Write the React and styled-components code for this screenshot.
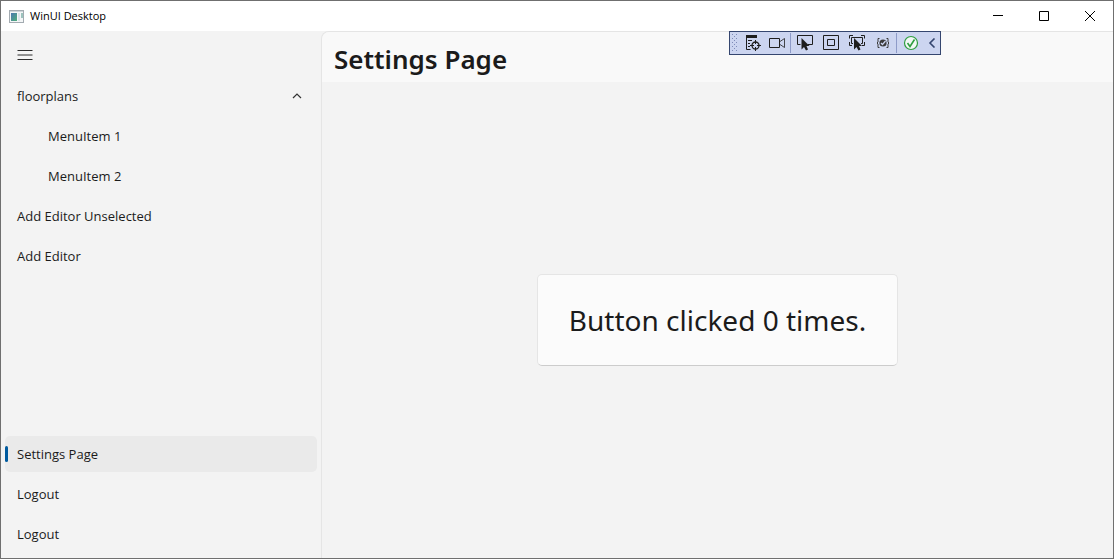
import React, { useState } from "react";
import styled, { createGlobalStyle, css } from "styled-components";

const displayFont = `"Segoe UI", "Noto Sans", sans-serif`;

const GlobalStyle = createGlobalStyle`
  *, *::before, *::after { box-sizing: border-box; }
  body {
    margin: 0;
    font-family: "Segoe UI", "Open Sans", "Noto Sans", sans-serif;
    font-size: 13px;
    color: #1b1b1b;
  }
  button { font: inherit; color: inherit; border: 0; padding: 0; background: none; }
  svg { display: block; }
`;

const Window = styled.div`
  position: relative;
  display: flex;
  flex-direction: column;
  min-height: 100vh;
  border: 1px solid #6f6f6f;
  background: #f3f3f3;
`;

const TitleBar = styled.header`
  display: flex;
  align-items: center;
  height: 30px;
  padding-left: 8px;
  background: #fff;
`;

const WindowTitle = styled.span`
  flex: 1;
  margin-left: 6px;
  font-size: 11px;
  line-height: 16px;
  color: #000;
`;

const CaptionButton = styled.button`
  display: grid;
  place-items: center;
  width: 46px;
  height: 30px;
`;

const Body = styled.div`
  display: flex;
  flex: 1;
`;

const Sidebar = styled.nav`
  display: flex;
  flex-direction: column;
  flex: 0 0 320px;
  padding: 4px;
`;

const MenuToggle = styled.button`
  display: grid;
  place-items: center;
  width: 40px;
  height: 40px;
`;

const NavList = styled.ul`
  display: grid;
  gap: 4px;
  list-style: none;
  margin: ${(p) => (p.$bottom ? "auto" : "3px")} 0 2px;
  padding: 0;
`;

const NavItem = styled.button`
  display: flex;
  align-items: center;
  justify-content: space-between;
  position: relative;
  width: 100%;
  height: 36px;
  padding: 0 15px 0 ${(p) => (p.$nested ? 43 : 12)}px;
  border-radius: 5px;
  line-height: 20px;
  text-align: left;
  ${(p) => p.$selected && css`
    background: #eaeaea;
    &::before {
      content: "";
      position: absolute;
      left: 0;
      top: 10px;
      width: 3px;
      height: 16px;
      border-radius: 2px;
      background: #005a9e;
    }
  `}
`;

const Content = styled.main`
  display: flex;
  flex-direction: column;
  flex: 1;
  border: solid #e5e5e5;
  border-width: 1px 0 0 1px;
  border-top-left-radius: 8px;
  overflow: hidden;
`;

const PageHeader = styled.div`
  height: 50px;
  padding: 7px 12px;
  background: #f9f9f9;
`;

const PageTitle = styled.h1`
  margin: 0;
  font-family: ${displayFont};
  font-size: 26px;
  line-height: 40px;
  font-weight: 600;
`;

const Stage = styled.div`
  display: grid;
  place-items: center;
  flex: 1;
`;

const CounterButton = styled.button`
  padding: 25px 31px;
  border: 1px solid #e5e5e5;
  border-bottom-color: #cccccc;
  border-radius: 5px;
  background: #fbfbfb;
  font-family: ${displayFont};
  font-size: 28px;
  line-height: 40px;
`;

const DebugToolbar = styled.div`
  position: absolute;
  top: 30px;
  right: 172px;
  display: flex;
  align-items: center;
  width: 212px;
  height: 24px;
  border: 1px solid #35466f;
  background: #ccd5f0;
`;

const Tool = styled.button`
  display: grid;
  place-items: center;
  width: ${(p) => p.$width || 26}px;
  height: 22px;
`;

const Divider = styled.span`
  width: 1px;
  height: 20px;
  margin-right: 1px;
  background: #8e9bc8;
`;

const AppIcon = () => (
  <svg width="15" height="13" viewBox="0 0 15 13">
    <defs>
      <linearGradient id="screen" x1="0" y1="0" x2="1" y2="1">
        <stop offset="0" stopColor="#4a78b0" />
        <stop offset="1" stopColor="#4fae79" />
      </linearGradient>
    </defs>
    <rect x=".5" y=".5" width="14" height="12" fill="#f4f6f7" stroke="#a3abb1" />
    <path d="M1 1.500h13" stroke="#cdd4d8" />
    <rect x="2" y="3" width="6" height="8" fill="url(#screen)" />
    <rect x="9" y="3" width="2" height="8" fill="#dbe5ea" />
    <rect x="12" y="3" width="2" height="5" fill="#9cc3bd" />
  </svg>
);

const Grip = () => (
  <svg width="10" height="20" viewBox="0 0 10 20" fill="#7f8cb8">
    {[0, 1, 2, 3, 4, 5, 6, 7, 8].map((row) =>
      (row % 2 ? [4] : [2, 6]).map((x) => (
        <rect key={`${row}-${x}`} x={x} y={row * 2 + 1} width="1" height="1" />
      ))
    )}
  </svg>
);

const TreeIcon = () => (
  <svg width="18" height="18" viewBox="0 0 18 18" fill="none" stroke="#1e1e1e">
    <path d="M2 1h11v3H2z" fill="#1e1e1e" stroke="none" />
    <path d="M2.500 4v11.500h4M4 6.500h4M4 9.500h2M4 12.500h2" />
    <circle cx="11.500" cy="11.500" r="3.500" strokeWidth="1.300" />
    <path d="M11.500 6v4M11.500 13v4M6 11.500h4M13 11.500h4" />
  </svg>
);

const CameraIcon = () => (
  <svg width="18" height="14" viewBox="0 0 18 14" fill="none" stroke="#1e1e1e">
    <path d="M.5 2.500h10v9H.5z" />
    <path d="M11 5.500l4.500-3v9L11 8.500" strokeWidth=".8" />
  </svg>
);

const SelectIcon = () => (
  <svg width="18" height="18" viewBox="0 0 18 18" fill="none" stroke="#1e1e1e">
    <path d="M4.500 10.500h-3v-9h15v9H12" />
    <path d="M5.500 4v11.500l2.500-2.500 2 3.500 2-1-1.500-3.500H13.500z" fill="#1e1e1e" stroke="none" />
  </svg>
);

const AdornerIcon = () => (
  <svg width="16" height="16" viewBox="0 0 16 16" fill="none" stroke="#1e1e1e">
    <path d="M.5.5h15v14H.5zM4.500 4.500h7v6h-7z" />
  </svg>
);

const TrackIcon = () => (
  <svg width="18" height="18" viewBox="0 0 18 18" fill="none" stroke="#1e1e1e">
    <path d="M1.500 4.500V1.500H5M13 1.500h3.500v3M1.500 8v3.500H4M16.500 8v3.500H14M5 9.500H3.500v-6h11v6H13" />
    <path d="M6 4v11.500l2.500-2.500 2 3.500 2-1-1.500-3.500h3z" fill="#1e1e1e" stroke="none" />
  </svg>
);

const ReloadIcon = () => (
  <svg width="14" height="12" viewBox="0 0 14 12" fill="none" stroke="#3b3b3b">
    <path d="M3.500 1.500H2v3.500L1 6l1 1v3.500h1.500M10.500 1.500H12v3.500l1 1-1 1v3.500h-1.500" />
    <circle cx="7" cy="6" r="3.600" fill="#3b3b3b" stroke="none" />
    <path d="M5 6l1.500 1.500L9.500 4" stroke="#ccd5f0" strokeWidth="1.300" />
  </svg>
);

const SuccessIcon = () => (
  <svg width="16" height="16" viewBox="0 0 16 16" fill="none">
    <circle cx="8" cy="8" r="6.500" fill="#f2f8f5" stroke="#2f9e3f" strokeWidth="1.200" />
    <path d="M4.500 8l2.500 3.500 4.500-7" stroke="#2f9e3f" strokeWidth="1.600" />
  </svg>
);

const CollapseIcon = () => (
  <svg width="8" height="10" viewBox="0 0 8 10" fill="none" stroke="#35466f" strokeWidth="1.600">
    <path d="M6.500.5L2 5l4.500 4.500" />
  </svg>
);

const ChevronUp = () => (
  <svg width="10" height="6" viewBox="0 0 10 6" fill="none" stroke="#333" strokeWidth="1.200">
    <path d="M1 5l4-4 4 4" />
  </svg>
);

const HamburgerIcon = () => (
  <svg width="16" height="12" viewBox="0 0 16 12" stroke="#2b2b2b">
    <path d="M.5 1.500h15M.5 6h15M.5 10.500h15" />
  </svg>
);

export default function App() {
  const [page, setPage] = useState("settings");
  const [open, setOpen] = useState(true);
  const [count, setCount] = useState(0);

  const item = (id, label, nested) => (
    <li key={id}>
      <NavItem $nested={nested} $selected={page === id} onClick={() => setPage(id)}>
        {label}
      </NavItem>
    </li>
  );

  return (
    <>
      <GlobalStyle />
      <Window>
        <TitleBar>
          <AppIcon />
          <WindowTitle>WinUI Desktop</WindowTitle>
          <CaptionButton aria-label="Minimize">
            <svg width="10" height="10" stroke="#000"><path d="M0 4.500h10" /></svg>
          </CaptionButton>
          <CaptionButton aria-label="Maximize">
            <svg width="10" height="10" stroke="#000" fill="none"><path d="M.5.5h9v9h-9z" /></svg>
          </CaptionButton>
          <CaptionButton aria-label="Close">
            <svg width="10" height="10" stroke="#000"><path d="M0 0l10 10M10 0L0 10" /></svg>
          </CaptionButton>
        </TitleBar>
        <Body>
          <Sidebar>
            <MenuToggle aria-label="Toggle navigation"><HamburgerIcon /></MenuToggle>
            <NavList>
              <li>
                <NavItem aria-expanded={open} onClick={() => setOpen(!open)}>
                  floorplans
                  <ChevronUp />
                </NavItem>
              </li>
              {open && item("item1", "MenuItem 1", true)}
              {open && item("item2", "MenuItem 2", true)}
              {item("unselected", "Add Editor Unselected")}
              {item("editor", "Add Editor")}
            </NavList>
            <NavList $bottom>
              {item("settings", "Settings Page")}
              {item("logout1", "Logout")}
              {item("logout2", "Logout")}
            </NavList>
          </Sidebar>
          <Content>
            <PageHeader>
              <PageTitle>Settings Page</PageTitle>
            </PageHeader>
            <Stage>
              <CounterButton onClick={() => setCount(count + 1)}>
                {`Button clicked ${count} times.`}
              </CounterButton>
            </Stage>
          </Content>
        </Body>
        <DebugToolbar role="toolbar" aria-label="Debug tools">
          <Grip />
          <Tool aria-label="Live visual tree"><TreeIcon /></Tool>
          <Tool $width={24} aria-label="Record"><CameraIcon /></Tool>
          <Divider />
          <Tool aria-label="Select element"><SelectIcon /></Tool>
          <Tool aria-label="Display adorners"><AdornerIcon /></Tool>
          <Tool aria-label="Track focused element"><TrackIcon /></Tool>
          <Tool aria-label="Binding failures"><ReloadIcon /></Tool>
          <Divider />
          <Tool aria-label="Hot reload"><SuccessIcon /></Tool>
          <Tool $width={16} aria-label="Collapse toolbar"><CollapseIcon /></Tool>
        </DebugToolbar>
      </Window>
    </>
  );
}
